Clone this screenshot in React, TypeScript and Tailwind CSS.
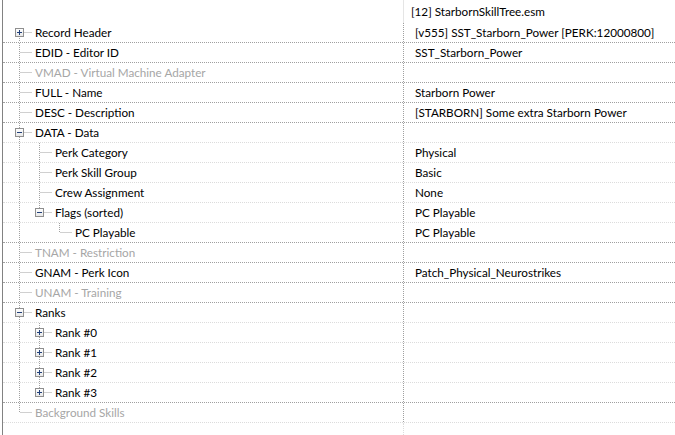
import React from "react";

type Row = {
  label: string;
  value?: string;
  level: number;
  kind: "leaf" | "plus" | "minus";
  muted?: boolean;
  last?: boolean;
  anc?: boolean[];
};

const rows: Row[] = [
  { label: "Record Header", value: "[v555] SST_Starborn_Power [PERK:12000800]", level: 0, kind: "plus" },
  { label: "EDID - Editor ID", value: "SST_Starborn_Power", level: 0, kind: "leaf" },
  { label: "VMAD - Virtual Machine Adapter", level: 0, kind: "leaf", muted: true },
  { label: "FULL - Name", value: "Starborn Power", level: 0, kind: "leaf" },
  { label: "DESC - Description", value: "[STARBORN] Some extra Starborn Power", level: 0, kind: "leaf" },
  { label: "DATA - Data", level: 0, kind: "minus" },
  { label: "Perk Category", value: "Physical", level: 1, kind: "leaf", anc: [true] },
  { label: "Perk Skill Group", value: "Basic", level: 1, kind: "leaf", anc: [true] },
  { label: "Crew Assignment", value: "None", level: 1, kind: "leaf", anc: [true] },
  { label: "Flags (sorted)", value: "PC Playable", level: 1, kind: "minus", anc: [true], last: true },
  { label: "PC Playable", value: "PC Playable", level: 2, kind: "leaf", anc: [true, false], last: true },
  { label: "TNAM - Restriction", level: 0, kind: "leaf", muted: true },
  { label: "GNAM - Perk Icon", value: "Patch_Physical_Neurostrikes", level: 0, kind: "leaf" },
  { label: "UNAM - Training", level: 0, kind: "leaf", muted: true },
  { label: "Ranks", level: 0, kind: "minus" },
  { label: "Rank #0", level: 1, kind: "plus", anc: [true] },
  { label: "Rank #1", level: 1, kind: "plus", anc: [true] },
  { label: "Rank #2", level: 1, kind: "plus", anc: [true] },
  { label: "Rank #3", level: 1, kind: "plus", anc: [true], last: true },
  { label: "Background Skills", level: 0, kind: "leaf", muted: true, last: true },
];

const LINE = "#a0a0a0";

// guide lines + expand box for one row, drawn in the row's gutter
function Gutter({ row, idx }: { row: Row; idx: number }) {
  const w = 20 * row.level + 32;
  const cx = 16.5 + 20 * row.level;
  const anc = row.anc ?? [];
  return (
    <svg width={w} height={19} className="shrink-0 block">
      {anc.map((cont, k) =>
        cont ? (
          <line key={k} x1={16.5 + 20 * k} y1={0} x2={16.5 + 20 * k} y2={19} stroke={LINE} strokeDasharray="1 1" />
        ) : null
      )}
      <line x1={cx} y1={idx === 0 ? 9 : 0} x2={cx} y2={row.last ? 9 : 19} stroke={LINE} strokeDasharray="1 1" />
      <line x1={cx + 1} y1={9.5} x2={cx + 12} y2={9.5} stroke={LINE} strokeDasharray="1 1" />
      {row.kind !== "leaf" && (
        <g>
          <defs>
            <linearGradient id={`bx${idx}`} x1="0" y1="0" x2="0" y2="1">
              <stop offset="0" stopColor="#ffffff" />
              <stop offset="1" stopColor="#e6e6e6" />
            </linearGradient>
          </defs>
          <rect x={cx - 4} y={5.5} width={8} height={8} fill={`url(#bx${idx})`} stroke="#8f8f8f" />
          <line x1={cx - 2.5} y1={9.5} x2={cx + 2.5} y2={9.5} stroke="#1f3f7a" />
          {row.kind === "plus" && <line x1={cx} y1={7} x2={cx} y2={12} stroke="#1f3f7a" />}
        </g>
      )}
    </svg>
  );
}

export default function App() {
  return (
    <div
      className="w-[675px] h-[435px] bg-white overflow-hidden pl-[2px] text-[11.7px] text-black"
      style={{ fontFamily: 'Lato, "Liberation Sans", sans-serif' }}
    >
      <div className="h-full flex flex-col border-l border-[#828282]">
        <div className="h-[23px] flex shrink-0">
          <div className="w-[400px] shrink-0" />
          <div className="flex-1 border-l border-[#e5e5e5] pl-[7px] flex items-center leading-none">
            [12] StarbornSkillTree.esm
          </div>
        </div>
        {rows.map((row, i) => {
          const next = rows[i + 1];
          const dark = next && next.level === 0;
          return (
            <div
              key={i}
              className={`h-[20px] flex shrink-0 border-b border-dotted ${dark ? "border-[#a0a0a0]" : "border-[#dcdcdc]"}`}
            >
              <div className="w-[400px] shrink-0 flex items-center">
                <Gutter row={row} idx={i} />
                <span className={`whitespace-nowrap leading-none ${row.muted ? "text-[#a6a6a6]" : ""}`}>
                  {row.label}
                </span>
              </div>
              <div className="flex-1 border-l border-dotted border-[#a0a0a0] pl-[11px] flex items-center whitespace-nowrap leading-none">
                {row.value}
              </div>
            </div>
          );
        })}
        <div className="flex-1 flex">
          <div className="w-[400px] shrink-0" />
          <div className="flex-1 border-l border-dotted border-[#dcdcdc]" />
        </div>
      </div>
    </div>
  );
}
